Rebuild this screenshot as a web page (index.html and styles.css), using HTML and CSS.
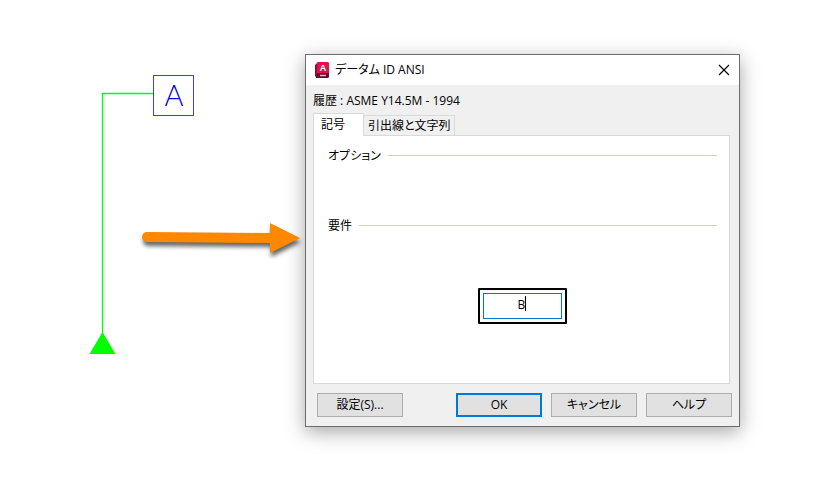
FILE: index.html
```html
<!DOCTYPE html>
<html lang="ja">

<head>
    <meta charset="UTF-8">
    <title>データム ID ANSI</title>
    <link rel="stylesheet" href="styles.css">
</head>

<body>
    <div class="wrap">
        <svg class="drawing" width="305" height="485" viewBox="0 0 305 485">
            <!-- 引出線 -->
            <path d="M153 93.5H102.5V335" fill="none" stroke="#00ff00" stroke-width="1.3"/>
            <path d="M102.500 332L115.500 354H89.500Z" fill="#00ff00"/>
            <rect x="153.500" y="75.500" width="40" height="40" fill="#fff" stroke="#4343c2"/>
            <text class="datum" x="174" y="106" text-anchor="middle">A</text>
            <!-- 矢印 -->
            <path class="arrow" d="M147 232L270 233V223L300 238L270 253V243L147 242A5 5 0 0 1 147 232Z" fill="#ff8800"/>
        </svg>

        <div class="dialog" role="dialog" aria-labelledby="title">
            <div class="titlebar">
                <svg class="logo" width="15" height="17" viewBox="0 0 15 17">
                    <path d="M0 3L3 0V13L2 16L0 14Z" fill="#8c0f35"/>
                    <path d="M3 0H13L14 1V12H2V1Z" fill="#e51050"/>
                    <path d="M2 11H14V15L13 16H1Z" fill="#6d0526"/>
                    <path d="M5 13.500H11" stroke="#e3b5c3" stroke-width="1.500"/>
                    <text class="logo-text" x="8" y="9" text-anchor="middle">A</text>
                </svg>
                <h1 id="title">データム ID ANSI</h1>
                <button class="close" aria-label="閉じる">
                    <svg width="12" height="12" viewBox="0 0 12 12">
                        <path d="M1 1L11 11M11 1L1 11" stroke="#000" stroke-width="1.200"/>
                    </svg>
                </button>
            </div>
            <div class="content">
                <p class="history">履歴 : ASME Y14.5M - 1994</p>
                <div class="tabs" role="tablist">
                    <button class="tab on" role="tab" aria-selected="true">記号</button>
                    <button class="tab" role="tab" aria-selected="false">引出線と文字列</button>
                </div>
                <div class="panel" role="tabpanel">
                    <div class="group">
                        <h2>オプション</h2>
                    </div>
                    <div class="group">
                        <h2><label for="datum">要件</label></h2>
                    </div>
                    <div class="frame">
                        <input class="symbol" id="datum" type="text" value="B">
                        <span class="caret"></span>
                    </div>
                </div>
                <div class="bar">
                    <button class="btn setting">設定(S)...</button>
                    <button class="btn ok">OK</button>
                    <button class="btn">キャンセル</button>
                    <button class="btn">ヘルプ</button>
                </div>
            </div>
        </div>
    </div>
</body>

</html>
```

FILE: styles.css
```css
* {
    box-sizing: border-box;
    margin: 0;
    padding: 0;
}

body {
    background: #fff;
    color: #000;
    font: 12px/16px "Open Sans", "Noto Sans CJK JP", sans-serif;
    font-feature-settings: "palt";
}

button,
input {
    font: inherit;
    font-feature-settings: inherit;
    color: inherit;
}

h1,
h2 {
    font-size: 12px;
    font-weight: normal;
    white-space: nowrap;
}

.wrap {
    display: flex;
    align-items: flex-start;
    padding-right: 80px;
}

/* 左側の図面 */
.drawing {
    flex: none;
    position: relative;
    z-index: 1;
}

.datum {
    font: 300 29px Lato, sans-serif;
    fill: #0000e0;
}

.arrow {
    filter: drop-shadow(1px 4px 2px rgba(0, 0, 0, 0.6));
}

/* ダイアログ */
.dialog {
    flex: 1;
    margin-top: 54px;
    border: 1px solid #6d6d6d;
    background: #f0f0f0;
    box-shadow: 0 5px 18px rgba(0, 0, 0, 0.35);
}

.titlebar {
    display: flex;
    align-items: center;
    gap: 5px;
    height: 30px;
    padding: 0 9px;
    background: #fff;
}

.logo-text {
    font: bold 9px "Liberation Sans", sans-serif;
    fill: #fff;
}

.close {
    display: flex;
    margin-left: auto;
    border: none;
    background: none;
}

.content {
    padding: 8px 7px 9px;
}

.tabs {
    display: flex;
    align-items: flex-end;
    margin-top: 4px;
}

.tab {
    height: 20px;
    padding: 0 3px 0 4px;
    border: 1px solid #d9d9d9;
    border-bottom: none;
    border-left: none;
    background: #f0f0f0;
}

.tab.on {
    width: 51px;
    height: 23px;
    margin-bottom: -1px;
    padding: 0 18px 1px 7px;
    border-left: 1px solid #d9d9d9;
    background: #fff;
    text-align: left;
    white-space: nowrap;
    z-index: 1;
}

.panel {
    height: 249px;
    margin-right: 2px;
    padding: 12px 12px 0 14px;
    border: 1px solid #d9d9d9;
    background: #fff;
}

.group {
    display: flex;
    align-items: center;
    gap: 7px;
    height: 15px;
    margin-bottom: 55px;
}

.group::after {
    content: "";
    flex: 1;
    height: 1px;
    background: #d0d0bf;
}

.frame {
    position: relative;
    width: 89px;
    margin: 0 auto;
    padding: 3px;
    border: 2px solid #000;
    border-radius: 1px;
}

.symbol {
    display: block;
    width: 100%;
    height: 26px;
    padding: 0 2px 4px 0;
    border: 1px solid #0078d7;
    outline: none;
    background: #fff;
    text-align: center;
}

.caret {
    position: absolute;
    left: 45px;
    top: 6px;
    width: 1px;
    height: 15px;
    background: #000;
}

.bar {
    display: flex;
    gap: 9px;
    margin-top: 9px;
    padding-left: 4px;
}

.btn {
    width: 86px;
    height: 24px;
    border: 1px solid #adadad;
    background: #e1e1e1;
}

.setting {
    margin-right: auto;
}

.ok {
    border: 2px solid #0078d7;
}
```
